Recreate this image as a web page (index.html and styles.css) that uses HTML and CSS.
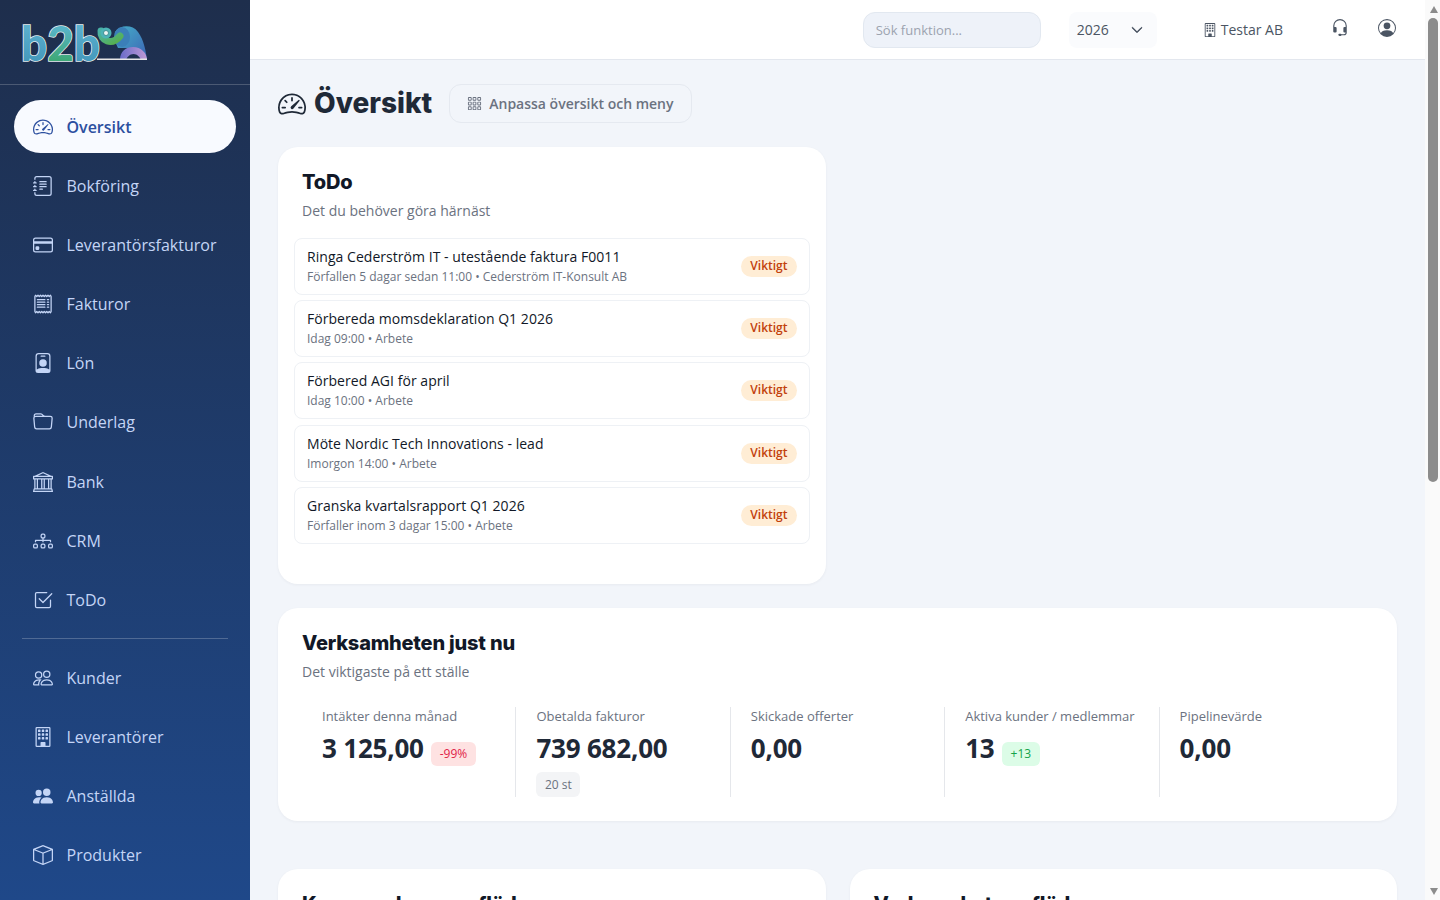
FILE: index.html
```html
<!DOCTYPE html>
<html lang="sv">
<head>
<meta charset="utf-8">
<title>Översikt</title>
<link rel="stylesheet" href="styles.css">
</head>
<body>
<svg class="defs" width="0" height="0" aria-hidden="true">
  <defs>
    <symbol id="i-speed" viewBox="0 0 16 16"><path d="M8 4a.5.5 0 0 1 .5.5V6a.5.5 0 0 1-1 0V4.5A.5.5 0 0 1 8 4M3.732 5.732a.5.5 0 0 1 .707 0l.915.914a.5.5 0 1 1-.708.708l-.914-.915a.5.5 0 0 1 0-.707M2 10a.5.5 0 0 1 .5-.5h1.586a.5.5 0 0 1 0 1H2.5A.5.5 0 0 1 2 10m9.5 0a.5.5 0 0 1 .5-.5h1.5a.5.5 0 0 1 0 1H12a.5.5 0 0 1-.5-.5m.754-4.246a.39.39 0 0 0-.527-.02L7.547 9.31a.91.91 0 1 0 1.302 1.258l3.434-4.297a.39.39 0 0 0-.029-.518z"/><path fill-rule="evenodd" d="M0 10a8 8 0 1 1 15.547 2.661c-.442 1.253-1.845 1.602-2.932 1.25C11.309 13.488 9.475 13 8 13c-1.474 0-3.31.488-4.615.911-1.087.352-2.49.003-2.932-1.25A8 8 0 0 1 0 10m8-7a7 7 0 0 0-6.603 9.329c.203.575.923.876 1.68.63C4.397 12.533 6.358 12 8 12s3.604.532 4.923.96c.757.245 1.477-.056 1.68-.631A7 7 0 0 0 8 3"/></symbol>
    <symbol id="i-journal" viewBox="0 0 16 16"><path d="M5 10.5a.5.5 0 0 1 .5-.5h2a.5.5 0 0 1 0 1h-2a.5.5 0 0 1-.5-.5m0-2a.5.5 0 0 1 .5-.5h5a.5.5 0 0 1 0 1h-5a.5.5 0 0 1-.5-.5m0-2a.5.5 0 0 1 .5-.5h5a.5.5 0 0 1 0 1h-5a.5.5 0 0 1-.5-.5m0-2a.5.5 0 0 1 .5-.5h5a.5.5 0 0 1 0 1h-5a.5.5 0 0 1-.5-.5"/><path d="M3 0h10a2 2 0 0 1 2 2v12a2 2 0 0 1-2 2H3a2 2 0 0 1-2-2v-1h1v1a1 1 0 0 0 1 1h10a1 1 0 0 0 1-1V2a1 1 0 0 0-1-1H3a1 1 0 0 0-1 1v1H1V2a2 2 0 0 1 2-2"/><path d="M1 5v-.5a.5.5 0 0 1 1 0V5h.5a.5.5 0 0 1 0 1h-2a.5.5 0 0 1 0-1zm0 3v-.5a.5.5 0 0 1 1 0V8h.5a.5.5 0 0 1 0 1h-2a.5.5 0 0 1 0-1zm0 3v-.5a.5.5 0 0 1 1 0v.5h.5a.5.5 0 0 1 0 1h-2a.5.5 0 0 1 0-1z"/></symbol>
    <symbol id="i-card" viewBox="0 0 16 16"><path d="M0 4a2 2 0 0 1 2-2h12a2 2 0 0 1 2 2v8a2 2 0 0 1-2 2H2a2 2 0 0 1-2-2zm2-1a1 1 0 0 0-1 1v1h14V4a1 1 0 0 0-1-1zm13 4H1v5a1 1 0 0 0 1 1h12a1 1 0 0 0 1-1z"/><path d="M2 10a1 1 0 0 1 1-1h1a1 1 0 0 1 1 1v1a1 1 0 0 1-1 1H3a1 1 0 0 1-1-1z"/></symbol>
    <symbol id="i-receipt" viewBox="0 0 16 16"><path d="M1.92.506a.5.5 0 0 1 .434.14L3 1.293l.646-.647a.5.5 0 0 1 .708 0L5 1.293l.646-.647a.5.5 0 0 1 .708 0L7 1.293l.646-.647a.5.5 0 0 1 .708 0L9 1.293l.646-.647a.5.5 0 0 1 .708 0l.646.647.646-.647a.5.5 0 0 1 .708 0l.646.647.646-.647a.5.5 0 0 1 .801.13l.5 1A.5.5 0 0 1 15 2v12a.5.5 0 0 1-.053.224l-.5 1a.5.5 0 0 1-.8.13L13 14.707l-.646.647a.5.5 0 0 1-.708 0L11 14.707l-.646.647a.5.5 0 0 1-.708 0L9 14.707l-.646.647a.5.5 0 0 1-.708 0L7 14.707l-.646.647a.5.5 0 0 1-.708 0L5 14.707l-.646.647a.5.5 0 0 1-.708 0L3 14.707l-.646.647a.5.5 0 0 1-.801-.13l-.5-1A.5.5 0 0 1 1 14V2a.5.5 0 0 1 .053-.224l.5-1a.5.5 0 0 1 .367-.27m.217 1.338L2 2.118v11.764l.137.274.51-.51a.5.5 0 0 1 .707 0l.646.647.646-.646a.5.5 0 0 1 .708 0l.646.646.646-.646a.5.5 0 0 1 .708 0l.646.646.646-.646a.5.5 0 0 1 .708 0l.646.646.646-.646a.5.5 0 0 1 .708 0l.646.646.646-.646a.5.5 0 0 1 .708 0l.509.509.137-.274V2.118l-.137-.274-.51.51a.5.5 0 0 1-.707 0L12 1.707l-.646.647a.5.5 0 0 1-.708 0L10 1.707l-.646.647a.5.5 0 0 1-.708 0L8 1.707l-.646.647a.5.5 0 0 1-.708 0L6 1.707l-.646.647a.5.5 0 0 1-.708 0L4 1.707l-.646.647a.5.5 0 0 1-.708 0z"/><path d="M3 4.5a.5.5 0 0 1 .5-.5h6a.5.5 0 1 1 0 1h-6a.5.5 0 0 1-.5-.5m0 2a.5.5 0 0 1 .5-.5h6a.5.5 0 1 1 0 1h-6a.5.5 0 0 1-.5-.5m0 2a.5.5 0 0 1 .5-.5h6a.5.5 0 1 1 0 1h-6a.5.5 0 0 1-.5-.5m0 2a.5.5 0 0 1 .5-.5h6a.5.5 0 0 1 0 1h-6a.5.5 0 0 1-.5-.5m8-6a.5.5 0 0 1 .5-.5h1a.5.5 0 0 1 0 1h-1a.5.5 0 0 1-.5-.5m0 2a.5.5 0 0 1 .5-.5h1a.5.5 0 0 1 0 1h-1a.5.5 0 0 1-.5-.5m0 2a.5.5 0 0 1 .5-.5h1a.5.5 0 0 1 0 1h-1a.5.5 0 0 1-.5-.5m0 2a.5.5 0 0 1 .5-.5h1a.5.5 0 0 1 0 1h-1a.5.5 0 0 1-.5-.5"/></symbol>
    <symbol id="i-badge" viewBox="0 0 16 16"><path d="M6.5 2a.5.5 0 0 0 0 1h3a.5.5 0 0 0 0-1zM11 8a3 3 0 1 1-6 0 3 3 0 0 1 6 0"/><path d="M4.5 0A2.5 2.5 0 0 0 2 2.5V14a2 2 0 0 0 2 2h8a2 2 0 0 0 2-2V2.5A2.5 2.5 0 0 0 11.5 0zM3 2.5A1.5 1.5 0 0 1 4.5 1h7A1.5 1.5 0 0 1 13 2.5v10.795a4.2 4.2 0 0 0-.776-.492C11.392 12.387 10.063 12 8 12s-3.392.387-4.224.803a4.2 4.2 0 0 0-.776.492z"/></symbol>
    <symbol id="i-folder" viewBox="0 0 16 16"><path d="M.54 3.87.5 3a2 2 0 0 1 2-2h3.672a2 2 0 0 1 1.414.586l.828.828A2 2 0 0 0 9.828 3h3.982a2 2 0 0 1 1.992 2.181l-.637 7A2 2 0 0 1 13.174 14H2.826a2 2 0 0 1-1.991-1.819l-.637-7a2 2 0 0 1 .342-1.31zM2.19 4a1 1 0 0 0-.996 1.09l.637 7a1 1 0 0 0 .995.91h10.348a1 1 0 0 0 .995-.91l.637-7A1 1 0 0 0 13.81 4zm4.69-1.707A1 1 0 0 0 6.172 2H2.5a1 1 0 0 0-1 .981l.006.139q.323-.119.684-.12h5.396z"/></symbol>
    <symbol id="i-bank" viewBox="0 0 16 16"><path d="m8 0 6.61 3h.89a.5.5 0 0 1 .5.5v2a.5.5 0 0 1-.5.5H15v7a.5.5 0 0 1 .485.38l.5 2a.498.498 0 0 1-.485.62H.5a.498.498 0 0 1-.485-.62l.5-2A.5.5 0 0 1 1 13V6H.5a.5.5 0 0 1-.5-.5v-2A.5.5 0 0 1 .5 3h.89zM3.777 3h8.447L8 1zM2 6v7h1V6zm2 0v7h2.5V6zm3.5 0v7h1V6zm2 0v7H12V6zM13 6v7h1V6zm2-1V4H1v1zm-.39 9H1.39l-.25 1h13.72z"/></symbol>
    <symbol id="i-diagram" viewBox="0 0 16 16"><path fill-rule="evenodd" d="M6 3.5A1.5 1.5 0 0 1 7.5 2h1A1.5 1.5 0 0 1 10 3.5v1A1.5 1.5 0 0 1 8.5 6v1H14a.5.5 0 0 1 .5.5v1a.5.5 0 0 1-1 0V8h-5v.5a.5.5 0 0 1-1 0V8h-5v.5a.5.5 0 0 1-1 0v-1A.5.5 0 0 1 2 7h5.5V6A1.5 1.5 0 0 1 6 4.5zM8.5 5a.5.5 0 0 0 .5-.5v-1a.5.5 0 0 0-.5-.5h-1a.5.5 0 0 0-.5.5v1a.5.5 0 0 0 .5.5zM0 11.5A1.5 1.5 0 0 1 1.5 10h1A1.5 1.5 0 0 1 4 11.5v1A1.5 1.5 0 0 1 2.5 14h-1A1.5 1.5 0 0 1 0 12.5zm1.5-.5a.5.5 0 0 0-.5.5v1a.5.5 0 0 0 .5.5h1a.5.5 0 0 0 .5-.5v-1a.5.5 0 0 0-.5-.5zm4.5.5A1.5 1.5 0 0 1 7.5 10h1a1.5 1.5 0 0 1 1.5 1.5v1A1.5 1.5 0 0 1 8.5 14h-1A1.5 1.5 0 0 1 6 12.5zm1.5-.5a.5.5 0 0 0-.5.5v1a.5.5 0 0 0 .5.5h1a.5.5 0 0 0 .5-.5v-1a.5.5 0 0 0-.5-.5zm4.5.5a1.5 1.5 0 0 1 1.5-1.5h1a1.5 1.5 0 0 1 1.5 1.5v1a1.5 1.5 0 0 1-1.5 1.5h-1a1.5 1.5 0 0 1-1.5-1.5zm1.5-.5a.5.5 0 0 0-.5.5v1a.5.5 0 0 0 .5.5h1a.5.5 0 0 0 .5-.5v-1a.5.5 0 0 0-.5-.5z"/></symbol>
    <symbol id="i-check" viewBox="0 0 16 16"><path d="M3 14.5A1.5 1.5 0 0 1 1.5 13V3A1.5 1.5 0 0 1 3 1.5h8a.5.5 0 0 1 0 1H3a.5.5 0 0 0-.5.5v10a.5.5 0 0 0 .5.5h10a.5.5 0 0 0 .5-.5V8a.5.5 0 0 1 1 0v5a1.5 1.5 0 0 1-1.5 1.5z"/><path d="m8.354 10.354 7-7a.5.5 0 0 0-.708-.708L8 9.293 5.354 6.646a.5.5 0 1 0-.708.708l3 3a.5.5 0 0 0 .708 0"/></symbol>
    <symbol id="i-people" viewBox="0 0 16 16"><path d="M15 14s1 0 1-1-1-4-5-4-5 3-5 4 1 1 1 1zm-7.978-1L7 12.996c.001-.264.167-1.03.76-1.72C8.312 10.629 9.282 10 11 10c1.717 0 2.687.63 3.24 1.276.593.69.758 1.457.76 1.72l-.008.002-.014.002zM11 7a2 2 0 1 0 0-4 2 2 0 0 0 0 4m3-2a3 3 0 1 1-6 0 3 3 0 0 1 6 0M6.936 9.28a6 6 0 0 0-1.23-.247A7 7 0 0 0 5 9c-4 0-5 3-5 4q0 1 1 1h4.216A2.24 2.24 0 0 1 5 13c0-1.01.377-2.042 1.09-2.904.243-.294.526-.569.846-.816M4.92 10A5.5 5.5 0 0 0 4 13H1c0-.26.164-1.03.76-1.724.545-.636 1.492-1.256 3.16-1.275ZM1.5 5.5a3 3 0 1 1 6 0 3 3 0 0 1-6 0m3-2a2 2 0 1 0 0 4 2 2 0 0 0 0-4"/></symbol>
    <symbol id="i-building" viewBox="0 0 16 16"><path d="M4 2.5a.5.5 0 0 1 .5-.5h1a.5.5 0 0 1 .5.5v1a.5.5 0 0 1-.5.5h-1a.5.5 0 0 1-.5-.5zm3 0a.5.5 0 0 1 .5-.5h1a.5.5 0 0 1 .5.5v1a.5.5 0 0 1-.5.5h-1a.5.5 0 0 1-.5-.5zm3.5-.5a.5.5 0 0 0-.5.5v1a.5.5 0 0 0 .5.5h1a.5.5 0 0 0 .5-.5v-1a.5.5 0 0 0-.5-.5zM4 5.5a.5.5 0 0 1 .5-.5h1a.5.5 0 0 1 .5.5v1a.5.5 0 0 1-.5.5h-1a.5.5 0 0 1-.5-.5zM7.500 5a.5.5 0 0 0-.5.5v1a.5.5 0 0 0 .5.5h1a.5.5 0 0 0 .5-.5v-1a.5.5 0 0 0-.5-.5zm2.500.5a.5.5 0 0 1 .5-.5h1a.5.5 0 0 1 .5.5v1a.5.5 0 0 1-.5.5h-1a.5.5 0 0 1-.5-.5zM4.500 8a.5.5 0 0 0-.5.5v1a.5.5 0 0 0 .5.5h1a.5.5 0 0 0 .5-.5v-1a.5.5 0 0 0-.5-.5zm2.500.5a.5.5 0 0 1 .5-.5h1a.5.5 0 0 1 .5.5v1a.5.5 0 0 1-.5.5h-1a.5.5 0 0 1-.5-.5zm3.500-.5a.5.5 0 0 0-.5.5v1a.5.5 0 0 0 .5.5h1a.5.5 0 0 0 .5-.5v-1a.5.5 0 0 0-.5-.5z"/><path d="M2 1a1 1 0 0 1 1-1h10a1 1 0 0 1 1 1v14a1 1 0 0 1-1 1H3a1 1 0 0 1-1-1zm11 0H3v14h3v-2.500a.5.5 0 0 1 .5-.5h3a.5.5 0 0 1 .5.5V15h3z"/></symbol>
    <symbol id="i-people-fill" viewBox="0 0 16 16"><path d="M7 14s-1 0-1-1 1-4 5-4 5 3 5 4-1 1-1 1zm4-6a3 3 0 1 0 0-6 3 3 0 0 0 0 6m-5.784 6A2.24 2.24 0 0 1 5 13c0-1.355.68-2.75 1.936-3.72A6.3 6.3 0 0 0 5 9c-4 0-5 3-5 4s1 1 1 1zM4.500 8a2.500 2.500 0 1 0 0-5 2.500 2.500 0 0 0 0 5"/></symbol>
    <symbol id="i-box" viewBox="0 0 16 16"><path d="M8.186 1.113a.5.5 0 0 0-.372 0L1.846 3.500 8 5.961 14.154 3.500zM15 4.239l-6.500 2.600v7.922l6.500-2.600V4.240zM7.500 14.762V6.838L1 4.239v7.925zM7.443.184a1.500 1.500 0 0 1 1.114 0l7.129 2.852A.5.5 0 0 1 16 3.500v8.662a1 1 0 0 1-.629.928l-7.185 2.874a.5.5 0 0 1-.372 0L.63 13.090a1 1 0 0 1-.63-.928V3.500a.5.5 0 0 1 .314-.464z"/></symbol>
    <symbol id="i-grid" viewBox="0 0 16 16"><path d="M4 2v2H2V2zm1 12v-2a1 1 0 0 0-1-1H2a1 1 0 0 0-1 1v2a1 1 0 0 0 1 1h2a1 1 0 0 0 1-1m0-5V7a1 1 0 0 0-1-1H2a1 1 0 0 0-1 1v2a1 1 0 0 0 1 1h2a1 1 0 0 0 1-1m0-5V2a1 1 0 0 0-1-1H2a1 1 0 0 0-1 1v2a1 1 0 0 0 1 1h2a1 1 0 0 0 1-1m5 10v-2a1 1 0 0 0-1-1H7a1 1 0 0 0-1 1v2a1 1 0 0 0 1 1h2a1 1 0 0 0 1-1m0-5V7a1 1 0 0 0-1-1H7a1 1 0 0 0-1 1v2a1 1 0 0 0 1 1h2a1 1 0 0 0 1-1m0-5V2a1 1 0 0 0-1-1H7a1 1 0 0 0-1 1v2a1 1 0 0 0 1 1h2a1 1 0 0 0 1-1M9 2v2H7V2zm5 0v2h-2V2zM4 7v2H2V7zm5 0v2H7V7zm5 0h-2v2h2zM4 12v2H2v-2zm5 0v2H7v-2zm5 0v2h-2v-2zM12 1a1 1 0 0 0-1 1v2a1 1 0 0 0 1 1h2a1 1 0 0 0 1-1V2a1 1 0 0 0-1-1zm-1 6a1 1 0 0 1 1-1h2a1 1 0 0 1 1 1v2a1 1 0 0 1-1 1h-2a1 1 0 0 1-1-1zm1 4a1 1 0 0 0-1 1v2a1 1 0 0 0 1 1h2a1 1 0 0 0 1-1v-2a1 1 0 0 0-1-1z"/></symbol>
    <symbol id="i-headset" viewBox="0 0 16 16"><path d="M8 1a5 5 0 0 0-5 5v1h1a1 1 0 0 1 1 1v3a1 1 0 0 1-1 1H3a1 1 0 0 1-1-1V6a6 6 0 1 1 12 0v6a2.500 2.500 0 0 1-2.500 2.500H9.366a1 1 0 0 1-.866.5h-1a1 1 0 1 1 0-2h1a1 1 0 0 1 .866.5H11.500A1.500 1.500 0 0 0 13 12h-1a1 1 0 0 1-1-1V8a1 1 0 0 1 1-1h1V6a5 5 0 0 0-5-5"/></symbol>
    <symbol id="i-person" viewBox="0 0 16 16"><path d="M11 6a3 3 0 1 1-6 0 3 3 0 0 1 6 0"/><path fill-rule="evenodd" d="M0 8a8 8 0 1 1 16 0A8 8 0 0 1 0 8m8-7a7 7 0 0 0-5.468 11.370C3.242 11.226 4.805 10 8 10s4.757 1.225 5.468 2.370A7 7 0 0 0 8 1"/></symbol>
    <symbol id="i-chevron" viewBox="0 0 16 16"><path fill-rule="evenodd" d="M1.646 4.646a.5.5 0 0 1 .708 0L8 10.293l5.646-5.647a.5.5 0 0 1 .708.708l-6 6a.5.5 0 0 1-.708 0l-6-6a.5.5 0 0 1 0-.708"/></symbol>
    <linearGradient id="g-b1" x1="0" y1="0" x2="0" y2="1"><stop offset="0" stop-color="#62b6d2"/><stop offset="1" stop-color="#3f93b8"/></linearGradient>
    <linearGradient id="g-2" x1="0" y1="0" x2="0" y2="1"><stop offset=".25" stop-color="#57b3c6"/><stop offset=".8" stop-color="#3fa978"/></linearGradient>
    <linearGradient id="g-body" x1="0" y1="0" x2="1" y2="1"><stop offset="0" stop-color="#45b0c9"/><stop offset="1" stop-color="#3c63b4"/></linearGradient>
    <linearGradient id="g-trunk" x1="0" y1="0" x2="1" y2="1"><stop offset="0" stop-color="#49b2a5"/><stop offset="1" stop-color="#57b04e"/></linearGradient>
    <linearGradient id="g-legs" x1="0" y1="0" x2="1" y2="0"><stop offset="0" stop-color="#6a6cc8"/><stop offset="1" stop-color="#c09ad6"/></linearGradient>
  </defs>
</svg>

<div class="app">
  <aside class="sidebar">
    <div class="brand">
      <svg class="logo" viewBox="0 0 128 62" width="128" height="62" role="img" aria-label="b2b">
        <text class="logo-b" x="-1" y="49" textLength="79" lengthAdjust="spacingAndGlyphs"><tspan fill="url(#g-b1)">b</tspan><tspan fill="url(#g-2)">2</tspan><tspan fill="url(#g-b1)">b</tspan></text>
        <path d="M93 20C98 13 110 12 116 20C122 28 124 40 125 47.500H119C118 42 113 37 106 36L96 36C93 30 92 25 93 20Z" fill="url(#g-body)"/>
        <ellipse cx="100" cy="25" rx="8" ry="10" fill="#3b7fb8"/>
        <path d="M79 19C78 29 90 34 98 24" fill="none" stroke="url(#g-trunk)" stroke-width="7" stroke-linecap="round"/>
        <circle cx="84" cy="21" r="5.500" fill="#4cb3b5"/>
        <circle cx="84" cy="21" r="2.500" fill="#eef6f4" stroke="#2f7f86" stroke-width=".8"/>
        <path d="M98 48C98 39 104 35 111 35C119 35 125 41 125 48H119C118 45 115 42 111.500 42C108 42 105 45 104 48Z" fill="url(#g-legs)"/>
        <rect x="75" y="46.500" width="50" height="1.500" fill="#e6e6e6"/>
      </svg>
    </div>
    <nav class="nav">
      <a class="nav-item active"><svg class="nav-icon"><use href="#i-speed"/></svg><span>Översikt</span></a>
      <a class="nav-item"><svg class="nav-icon"><use href="#i-journal"/></svg><span>Bokföring</span></a>
      <a class="nav-item"><svg class="nav-icon"><use href="#i-card"/></svg><span>Leverantörsfakturor</span></a>
      <a class="nav-item"><svg class="nav-icon"><use href="#i-receipt"/></svg><span>Fakturor</span></a>
      <a class="nav-item"><svg class="nav-icon"><use href="#i-badge"/></svg><span>Lön</span></a>
      <a class="nav-item"><svg class="nav-icon"><use href="#i-folder"/></svg><span>Underlag</span></a>
      <a class="nav-item"><svg class="nav-icon"><use href="#i-bank"/></svg><span>Bank</span></a>
      <a class="nav-item"><svg class="nav-icon"><use href="#i-diagram"/></svg><span>CRM</span></a>
      <a class="nav-item"><svg class="nav-icon"><use href="#i-check"/></svg><span>ToDo</span></a>
      <hr class="nav-rule">
      <a class="nav-item"><svg class="nav-icon"><use href="#i-people"/></svg><span>Kunder</span></a>
      <a class="nav-item"><svg class="nav-icon"><use href="#i-building"/></svg><span>Leverantörer</span></a>
      <a class="nav-item"><svg class="nav-icon"><use href="#i-people-fill"/></svg><span>Anställda</span></a>
      <a class="nav-item"><svg class="nav-icon"><use href="#i-box"/></svg><span>Produkter</span></a>
    </nav>
  </aside>

  <main class="main">
    <header class="topbar">
      <input class="search" type="text" placeholder="Sök funktion...">
      <div class="year"><span>2026</span><svg class="year-chev"><use href="#i-chevron"/></svg></div>
      <div class="company"><svg class="company-icon"><use href="#i-building"/></svg><span>Testar AB</span></div>
      <svg class="top-icon headset"><use href="#i-headset"/></svg>
      <svg class="top-icon person"><use href="#i-person"/></svg>
    </header>

    <div class="content">
      <div class="title-row">
        <svg class="title-icon"><use href="#i-speed"/></svg>
        <h1>Översikt</h1>
        <button class="customize" type="button"><svg class="customize-icon"><use href="#i-grid"/></svg>Anpassa översikt och meny</button>
      </div>

      <div class="two-col">
        <section class="card todo-card">
          <h2>ToDo</h2>
          <p class="sub">Det du behöver göra härnäst</p>
          <ul class="todo-list">
            <li class="todo"><div><div class="todo-title">Ringa Cederström IT - utestående faktura F0011</div><div class="todo-meta">Förfallen 5 dagar sedan 11:00 • Cederström IT-Konsult AB</div></div><span class="pill">Viktigt</span></li>
            <li class="todo"><div><div class="todo-title">Förbereda momsdeklaration Q1 2026</div><div class="todo-meta">Idag 09:00 • Arbete</div></div><span class="pill">Viktigt</span></li>
            <li class="todo"><div><div class="todo-title">Förbered AGI för april</div><div class="todo-meta">Idag 10:00 • Arbete</div></div><span class="pill">Viktigt</span></li>
            <li class="todo"><div><div class="todo-title">Möte Nordic Tech Innovations - lead</div><div class="todo-meta">Imorgon 14:00 • Arbete</div></div><span class="pill">Viktigt</span></li>
            <li class="todo"><div><div class="todo-title">Granska kvartalsrapport Q1 2026</div><div class="todo-meta">Förfaller inom 3 dagar 15:00 • Arbete</div></div><span class="pill">Viktigt</span></li>
          </ul>
        </section>
      </div>

      <section class="card stats-card">
        <h2>Verksamheten just nu</h2>
        <p class="sub">Det viktigaste på ett ställe</p>
        <div class="stats">
          <div class="stat"><div class="stat-label">Intäkter denna månad</div><div class="stat-row"><span class="stat-value">3 125,00</span><span class="chip chip-red">-99%</span></div></div>
          <div class="stat"><div class="stat-label">Obetalda fakturor</div><div class="stat-row"><span class="stat-value">739 682,00</span></div><span class="chip chip-gray">20 st</span></div>
          <div class="stat"><div class="stat-label">Skickade offerter</div><div class="stat-row"><span class="stat-value">0,00</span></div></div>
          <div class="stat"><div class="stat-label">Aktiva kunder / medlemmar</div><div class="stat-row"><span class="stat-value">13</span><span class="chip chip-green">+13</span></div></div>
          <div class="stat"><div class="stat-label">Pipelinevärde</div><div class="stat-row"><span class="stat-value">0,00</span></div></div>
        </div>
      </section>

      <div class="two-col lower">
        <section class="card lower-card"><h2>Kommande pengaflöde</h2></section>
        <section class="card lower-card"><h2>Verksamhetens flöde</h2></section>
      </div>
    </div>
  </main>

  <div class="scrollbar" aria-hidden="true">
    <div class="sb-btn"><span class="sb-up"></span></div>
    <div class="sb-track"><div class="sb-thumb"></div></div>
    <div class="sb-btn"><span class="sb-down"></span></div>
  </div>
</div>
</body>
</html>
```

FILE: styles.css
```css
* { box-sizing: border-box; }
html, body { margin: 0; height: 100%; overflow: hidden; }
body { font-family: "Open Sans", "Noto Sans", sans-serif; color: #1f2937; background: #f2f5fa; }
.defs { display: block; height: 0; width: 0; overflow: hidden; }
.app { display: flex; height: 900px; }

.sidebar { flex: 0 0 250px; height: 900px; overflow: hidden; background: linear-gradient(180deg, #1e2e4c 0%, #1f4889 100%); }
.brand { height: 85px; padding: 12px 0 0 22px; border-bottom: 1px solid rgba(255,255,255,.2); }
.logo { display: block; overflow: visible; }
.logo-b { font-family: "Lato", sans-serif; font-weight: 900; font-size: 47px; stroke: #e8eef0; stroke-width: 1.6px; paint-order: stroke; }
.nav { padding: 15px 14px 0; display: flex; flex-direction: column; }
.nav-item { display: flex; align-items: center; gap: 14px; height: 53px; margin-bottom: 6.18px; padding-left: 18.500px; border-radius: 27px; color: #c4d5f6; font-size: 16px; }
.nav-item.active { background: #f8faff; color: #2c4f9f; font-weight: 600; }
.nav-icon { width: 20px; height: 20px; flex: none; fill: currentColor; }
.nav-rule { border: 0; border-top: 1px solid rgba(255,255,255,.22); margin: 5px 8px 12.5px; width: 206px; }

.main { flex: 1; min-width: 0; height: 900px; overflow-y: scroll; scrollbar-width: none; }
.topbar { position: sticky; top: 0; z-index: 2; height: 60px; background: #fff; border-bottom: 1px solid #e3e7ee; display: flex; align-items: center; padding-right: 29px; }
.search { margin-left: auto; width: 178px; height: 36px; border: 1px solid #e2e8f0; background: #eef2f9; border-radius: 12px; padding: 0 12px; font: 13px "Open Sans", sans-serif; color: #374151; outline: none; }
.search::placeholder { color: #9ca3af; opacity: 1; }
.year { margin-left: 28px; width: 88px; height: 36px; background: #fafbfd; border-radius: 8px; display: flex; align-items: center; justify-content: space-between; padding: 0 14px 0 8px; font-size: 14px; color: #4b5563; }
.year-chev { width: 12px; height: 12px; fill: #374151; stroke: #374151; stroke-width: 1; }
.company { margin-left: 45px; display: flex; align-items: center; gap: 3px; font-size: 14px; color: #4b5563; }
.company-icon { width: 16px; height: 16px; padding: 1px 0; fill: #4b5563; flex: none; }
.top-icon { width: 18px; height: 18px; fill: #4b5563; margin-bottom: 4px; flex: none; }
.headset { margin-left: 48px; }
.person { margin-left: 29px; }

.scrollbar { flex: 0 0 15px; height: 900px; background: #fafafa; display: flex; flex-direction: column; }
.sb-btn { flex: 0 0 18px; display: flex; align-items: center; justify-content: center; padding-left: 2px; }
.sb-track { flex: 1; padding: 0 2px 0 3px; }
.sb-thumb { height: 464px; background: #8c8c8c; border-radius: 5px; }
.sb-up { width: 0; height: 0; border-left: 4.500px solid transparent; border-right: 4.500px solid transparent; border-bottom: 7px solid #8c8c8c; }
.sb-down { width: 0; height: 0; border-left: 4.500px solid transparent; border-right: 4.500px solid transparent; border-top: 7px solid #8c8c8c; }

.content { padding: 24px 28px 24px; }
.title-row { display: flex; align-items: center; height: 39px; margin-bottom: 24px; }
.title-icon { width: 28px; height: 28px; fill: #1f2937; flex: none; margin-right: 8px; }
h1 { margin: 0 17px 0 0; font-family: "Inter", sans-serif; font-weight: 800; font-size: 28px; color: #1f2937; line-height: 39px; }
.customize { height: 39px; padding: 0 17.500px 0 17px; background: transparent; border: 1px solid #e5e9f0; border-radius: 12px; display: flex; align-items: center; gap: 7px; font: 600 14px "Open Sans", sans-serif; color: #6b7280; }
.customize-icon { width: 15px; height: 15px; fill: #6b7280; flex: none; }

.two-col { display: grid; grid-template-columns: 1fr 1fr; gap: 24px; }
.card { background: #fff; border-radius: 20px; padding: 24px; box-shadow: 0 1px 3px rgba(30,41,59,.05); }
h2 { margin: 0; font-family: "Inter", sans-serif; font-weight: 800; font-size: 20px; line-height: 30px; color: #111827; letter-spacing: -.2px; }
.sub { margin: 4px 0 0; font-size: 14px; line-height: 20px; color: #6b7280; }

.todo-card { height: 437px; padding: 20px 16px 0; }
.todo-card h2, .todo-card .sub { padding-left: 8px; }
.todo-list { list-style: none; margin: 17px 0 0; padding: 0; display: flex; flex-direction: column; gap: 5.200px; }
.todo { height: 57px; border: 1px solid #eef1f5; border-radius: 8px; padding: 0 12px; display: flex; align-items: center; justify-content: space-between; }
.todo-title { font-size: 14px; font-weight: 500; line-height: 19px; color: #111827; letter-spacing: .04px; }
.todo-meta { margin-top: 1px; font-size: 12px; line-height: 19px; color: #6b7280; }
.pill { height: 21px; line-height: 20px; padding: 0 9px; border-radius: 11px; background: #ffedd5; color: #c2410c; font-size: 12px; font-weight: 600; }

.stats-card { height: 213px; margin-top: 24px; padding: 20px 24px 0; }
.stats { display: grid; grid-template-columns: repeat(5, 1fr); margin: 25px -1px 0 0; }
.stat { height: 90px; padding-left: 20px; border-right: 1px solid #e5e7eb; }
.stat:last-child { border-right: 0; }
.stat-label { font-size: 13px; line-height: 18px; color: #6b7280; }
.stat-row { display: flex; align-items: center; gap: 7.600px; margin-top: 5px; height: 36px; }
.stat-value { font-size: 26px; font-weight: 700; line-height: 36px; color: #1f2937; letter-spacing: -.2px; }
.chip { display: inline-block; height: 24px; line-height: 24px; padding: 0 8.400px; border-radius: 6px; font-size: 12px; }
.stat-row .chip { margin-top: 11px; }
.chip-red { background: #fee2e2; color: #e11d48; }
.chip-green { background: #dcfce7; color: #16a34a; }
.chip-gray { margin-top: 6px; height: 25px; line-height: 26px; padding: 0 8.500px; background: #f3f4f6; color: #6b7280; }

.lower { margin-top: 48px; }
.lower-card { min-height: 783px; padding-top: 20px; }
.lower-card h2 { white-space: nowrap; }
```
